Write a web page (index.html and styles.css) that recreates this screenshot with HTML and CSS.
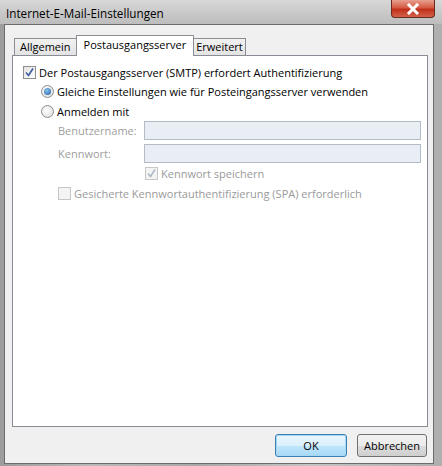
FILE: index.html
```html
<!DOCTYPE html>
<html>
<head>
<meta charset="utf-8">
<link rel="stylesheet" href="styles.css">
</head>
<body>
<div class="window">
  <div class="titlebar">
    <span class="title">Internet-E-Mail-Einstellungen</span>
    <div class="close"><svg width="14" height="12" viewBox="0 0 14 12"><path d="M3 2 L11 10 M11 2 L3 10" stroke="#fff" stroke-width="3" stroke-linecap="square"/></svg></div>
  </div>
  <div class="client">
    <div class="tabs">
      <div class="tab">Allgemein</div>
      <div class="tab active">Postausgangsserver</div>
      <div class="tab narrow">Erweitert</div>
    </div>
    <div class="panel">
      <label class="row main"><span class="cb checked"><svg width="11" height="11" viewBox="0 0 11 11"><path d="M2 5.5 L4.5 8.5 L9 1.5" fill="none" stroke="#3a5c9a" stroke-width="1.6"/></svg></span>Der Postausgangsserver (SMTP) erfordert Authentifizierung</label>
      <label class="row radio-row"><span class="radio on"><span class="dot"></span></span>Gleiche Einstellungen wie für Posteingangsserver verwenden</label>
      <label class="row radio-row r2"><span class="radio"></span>Anmelden mit</label>
      <div class="field f1"><span class="flabel">Benutzername:</span><span class="input"></span></div>
      <div class="field f2"><span class="flabel">Kennwort:</span><span class="input"></span></div>
      <label class="row save dis"><span class="cb dis"><svg width="11" height="11" viewBox="0 0 11 11"><path d="M2 5.5 L4.5 8.5 L9 1.5" fill="none" stroke="#a8b4c4" stroke-width="1.4"/></svg></span>Kennwort speichern</label>
      <label class="row spa dis"><span class="cb dis"></span>Gesicherte Kennwortauthentifizierung (SPA) erforderlich</label>
    </div>
    <div class="buttons">
      <button class="btn default">OK</button>
      <button class="btn">Abbrechen</button>
    </div>
  </div>
</div>
</body>
</html>
```
FILE: styles.css
```css
* { box-sizing: border-box; }
html, body { margin: 0; padding: 0; }
body {
  width: 442px; height: 466px; overflow: hidden;
  font-family: "Open Sans", "Noto Sans", sans-serif;
  font-size: 11px;
}
.window {
  width: 442px; height: 466px;
  display: flex; flex-direction: column;
  background: linear-gradient(90deg, #9c9c9c 0%, #b9b9b9 20%, #a8a8a8 45%, #c4c4c4 70%, #aeaeae 100%);
}
.titlebar {
  height: 24px; flex: none;
  display: flex; align-items: flex-start; justify-content: space-between;
  background: linear-gradient(180deg, #d8d8d8 0%, #c7c7c7 60%, #bdbdbd 100%);
}
.title {
  margin: 5px 0 0 6px;
  font-size: 11.7px; color: #000;
}
.close {
  width: 44px; height: 18px; margin-right: 7px;
  border: 1px solid #6b2a22; border-top: none;
  border-radius: 0 0 4px 4px;
  background: linear-gradient(180deg, #e8a08f 0%, #d55a43 45%, #c0301a 55%, #d2624a 100%);
  display: flex; align-items: center; justify-content: center;
}
.client {
  flex: 1;
  margin: 0 8px 2px 4px;
  background: #f0f0f0;
  border: 1px solid #6c6c6c;
  display: flex; flex-direction: column;
  padding: 10px 5px 0 7px;
}
.tabs { display: flex; align-items: flex-end; padding-left: 2px; height: 20px; position: relative; z-index: 1; }
.tab {
  height: 17px;
  padding: 0 5px;
  border: 1px solid #8c8e94; border-bottom: none;
  background: linear-gradient(180deg, #f2f2f2, #e3e3e3);
  line-height: 16px; color: #000;
  margin-right: -1px;
}
.tab.narrow { padding: 0 2px; }
.tab.active {
  height: 21px; background: #fff; line-height: 18px;
  margin-bottom: -1px; padding: 0 7px;
}
.panel {
  height: 372px; flex: none;
  background: #fff;
  border: 1px solid #898c95;
  padding: 8px 0 0 10px;
  display: flex; flex-direction: column;
}
.row { display: flex; align-items: center; height: 16px; color: #000; }
.cb {
  width: 13px; height: 13px; flex: none;
  border: 1px solid #8e8f8f;
  background: linear-gradient(135deg, #e3e3e3, #fdfdfd);
  margin-right: 3px;
  display: flex; align-items: center; justify-content: center;
}
.cb.dis { border-color: #c6c6c6; background: #f4f4f4; }
.radio-row { margin-left: 18px; margin-top: 3px; }
.r2 { margin-top: 4px; }
.radio {
  width: 13px; height: 13px; flex: none; border-radius: 50%;
  border: 1px solid #8e8f8f;
  background: radial-gradient(circle at 40% 40%, #fff, #d8d8d8);
  margin-right: 3px;
  display: flex; align-items: center; justify-content: center;
}
.dot {
  width: 7px; height: 7px; border-radius: 50%;
  background: radial-gradient(circle at 40% 35%, #8bc4f0, #1b5b9c);
}
.field { display: flex; align-items: center; margin-left: 35px; color: #a0a0a0; }
.f1 { margin-top: 2px; }
.f2 { margin-top: 4px; }
.flabel { width: 86px; }
.input {
  width: 277px; height: 19px;
  border: 1px solid #b4bcc8;
  background: #e9eef5;
}
.dis { color: #9a9a9a; }
.save { margin-left: 122px; margin-top: 2px; }
.spa { margin-left: 35px; margin-top: 4px; }
.buttons {
  display: flex; justify-content: flex-end; gap: 10px;
  margin-top: 7px; padding-right: 1px;
}
.btn {
  height: 23px; width: 72px;
  font-family: inherit; font-size: 11px; color: #000;
  border: 1px solid #707070; border-radius: 3px;
  background: linear-gradient(180deg, #f2f2f2 0%, #ebebeb 50%, #dddddd 51%, #cfcfcf 100%);
  padding: 0;
}
.btn + .btn { width: 70px; }
.btn.default {
  border-color: #3c7fb1;
  box-shadow: inset 0 0 0 1px #a6d8f5;
  background: linear-gradient(180deg, #eaf6fd 0%, #d9f0fc 50%, #bee6fd 51%, #a7d9f5 100%);
}
```
